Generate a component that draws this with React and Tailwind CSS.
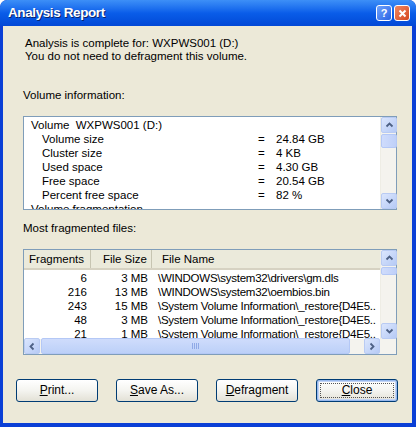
import React from "react";

const font = { fontFamily: '"Liberation Sans", Arial, sans-serif' };

function Chevron({ dir }) {
  const paths = {
    up: "M1.5 5.5 L4.5 2.5 L7.5 5.5",
    down: "M1.5 2.5 L4.5 5.5 L7.5 2.5",
    left: "M5.5 1.5 L2.5 4.5 L5.5 7.5",
    right: "M2.5 1.5 L5.5 4.5 L2.5 7.5",
  };
  return (
    <svg width="9" height="9" viewBox="0 0 9 9">
      <path d={paths[dir]} fill="none" stroke="#4d6185" strokeWidth="1.8" />
    </svg>
  );
}

function ScrollBtn({ dir }) {
  return (
    <div className="w-[16px] h-[16px] shrink-0 flex items-center justify-center rounded-[2px] border border-[#b9cbf3] bg-gradient-to-br from-[#dbe6fd] to-[#b6caf5]">
      <Chevron dir={dir} />
    </div>
  );
}

function VScroll({ thumbTop, thumbH }) {
  return (
    <div className="w-[16px] h-full flex flex-col bg-[#f4f3ee] border-l border-[#eeede5]">
      <ScrollBtn dir="up" />
      <div className="flex-1 relative">
        <div
          className="absolute left-0 w-[16px] rounded-[2px] border border-[#b4c8f6] bg-gradient-to-r from-[#cfdcfc] to-[#bfd0f8]"
          style={{ top: thumbTop, height: thumbH }}
        />
      </div>
      <ScrollBtn dir="down" />
    </div>
  );
}

function Btn({ children, focused }) {
  return (
    <div
      className={
        "w-[82px] h-[23px] rounded-[3px] border border-[#003c74] bg-gradient-to-b from-[#ffffff] via-[#f4f4f0] to-[#e3e1d6] flex items-center justify-center text-[12px] text-black " +
        (focused ? "shadow-[inset_0_0_0_1px_#97b8ec,inset_0_0_0_2px_#c2d4f6]" : "")
      }
    >
      {focused ? (
        <span className="w-[74px] h-[15px] border border-dotted border-[#555] flex items-center justify-center">
          {children}
        </span>
      ) : (
        children
      )}
    </div>
  );
}

const volRows = [
  ["Volume size", "24.84 GB"],
  ["Cluster size", "4 KB"],
  ["Used space", "4.30 GB"],
  ["Free space", "20.54 GB"],
  ["Percent free space", "82 %"],
];

const files = [
  ["6", "3 MB", "\\WINDOWS\\system32\\drivers\\gm.dls"],
  ["216", "13 MB", "\\WINDOWS\\system32\\oembios.bin"],
  ["243", "15 MB", "\\System Volume Information\\_restore{D4E5.."],
  ["48", "3 MB", "\\System Volume Information\\_restore{D4E5.."],
  ["21", "1 MB", "\\System Volume Information\\_restore{D4E5.."],
];

export default function App() {
  return (
    <div
      className="w-[416px] h-[427px] bg-[#0a3fd6] rounded-t-[7px] flex flex-col overflow-hidden"
      style={font}
    >
      {/* title bar */}
      <div className="h-[26px] shrink-0 flex items-center pl-[8px] pr-[6px] bg-gradient-to-b from-[#3d8ff7] via-[#0a5de9] to-[#0348d6] rounded-t-[7px]">
        <span className="text-white font-bold text-[13.5px] tracking-[-0.4px] [text-shadow:1px_1px_0_#0a246a]">
          Analysis Report
        </span>
        <div className="ml-auto flex gap-[2px]">
          <div className="w-[16px] h-[16px] rounded-[3px] border border-white bg-gradient-to-br from-[#6fa2fb] to-[#2a62e4] flex items-center justify-center text-white font-bold text-[11px] leading-none">
            ?
          </div>
          <div className="w-[16px] h-[16px] rounded-[3px] border border-white bg-gradient-to-br from-[#f0875f] to-[#d4441b] flex items-center justify-center">
            <svg width="9" height="9" viewBox="0 0 9 9">
              <path d="M1.5 1.5 L7.5 7.5 M7.5 1.5 L1.5 7.5" stroke="white" strokeWidth="2" />
            </svg>
          </div>
        </div>
      </div>

      {/* body */}
      <div className="flex-1 ml-[3px] mr-[4px] mb-[4px] bg-[#ece9d8] flex flex-col text-[11.5px] text-black leading-[13px] pl-[20px]">
        <div className="mt-[11px] pl-[2px]">
          <div>Analysis is complete for: WXPWS001 (D:)</div>
          <div>You do not need to defragment this volume.</div>
        </div>

        <div className="mt-[26px]">Volume information:</div>

        <div className="mt-[14px] w-[374px] h-[94px] border border-[#7f9db9] bg-white flex">
          <div className="flex-1 overflow-hidden pt-[1px] leading-[14px]">
            <div className="pl-[7px] h-[14px]">Volume&nbsp;&nbsp;WXPWS001 (D:)</div>
            {volRows.map(([k, v]) => (
              <div key={k} className="flex h-[14px] pl-[18px]">
                <span className="w-[216px]">{k}</span>
                <span className="w-[18px]">=</span>
                <span>{v}</span>
              </div>
            ))}
            <div className="pl-[7px] h-[14px]">Volume fragmentation</div>
          </div>
          <VScroll thumbTop={1} thumbH={14} />
        </div>

        <div className="mt-[12px]">Most fragmented files:</div>

        <div className="mt-[14px] w-[374px] h-[106px] border border-[#7f9db9] bg-white flex flex-col">
          <div className="flex flex-1 min-h-0">
            <div className="flex-1 flex flex-col overflow-hidden">
              <div className="h-[20px] shrink-0 flex bg-[#ebeadb] border-b-[2px] border-[#d6d2c2] leading-[18px]">
                <div className="w-[67px] text-right pr-[6px] border-r border-[#c7c5b2]">Fragments</div>
                <div className="w-[61px] text-right pr-[4px] border-r border-[#c7c5b2]">File Size</div>
                <div className="flex-1 pl-[10px]">File Name</div>
              </div>
              <div className="flex-1 overflow-hidden pt-[1px] leading-[14px]">
                {files.map(([a, b, c], i) => (
                  <div key={i} className="flex h-[14px] whitespace-nowrap">
                    <div className="w-[67px] text-right pr-[4px]">{a}</div>
                    <div className="w-[61px] text-right pr-[4px]">{b}</div>
                    <div className="flex-1 pl-[6px] overflow-hidden tracking-[-0.25px]">{c}</div>
                  </div>
                ))}
              </div>
            </div>
            <VScroll thumbTop={1} thumbH={8} />
          </div>
          <div className="h-[15px] shrink-0 flex bg-[#f4f3ee]">
            <div className="flex-1 flex">
              <div className="-mt-px">
                <ScrollBtn dir="left" />
              </div>
              <div className="flex-1 relative">
                <div className="absolute -top-px bottom-0 left-[1px] right-[14px] rounded-[2px] border border-[#b4c8f6] bg-gradient-to-b from-[#cfdcfc] to-[#bcd0f8] flex items-center justify-center">
                  <div className="flex gap-[1px]">
                    {[0, 1, 2, 3].map((g) => (
                      <div key={g} className="w-[1px] h-[6px] bg-[#eef3fe] border-r border-[#8fa9e6]" />
                    ))}
                  </div>
                </div>
              </div>
              <div className="-mt-px">
                <ScrollBtn dir="right" />
              </div>
            </div>
            <div className="w-[16px]" />
          </div>
        </div>

        <div className="mt-[24px] -ml-[7px] flex gap-[18px]">
          <Btn>
            <span>
              <u>P</u>rint...
            </span>
          </Btn>
          <Btn>
            <span>
              <u>S</u>ave As...
            </span>
          </Btn>
          <Btn>
            <span>
              <u>D</u>efragment
            </span>
          </Btn>
          <Btn focused>
            <span>
              <u>C</u>lose
            </span>
          </Btn>
        </div>
      </div>
    </div>
  );
}
